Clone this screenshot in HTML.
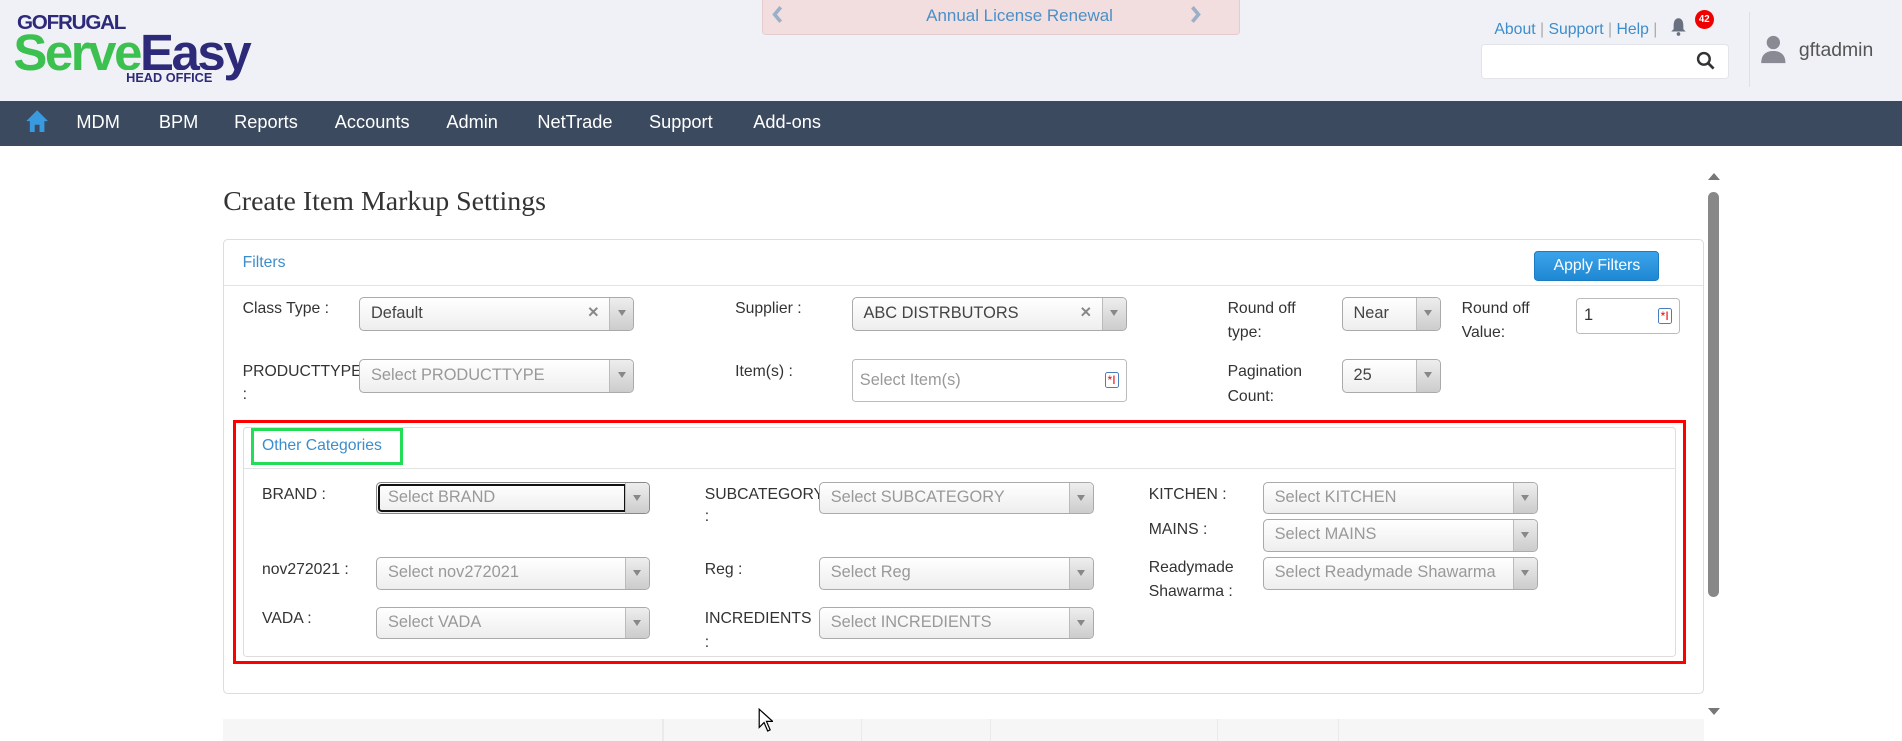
<!DOCTYPE html>
<html><head><meta charset="utf-8"><style>
html,body{margin:0;padding:0;background:#fff;overflow:hidden;width:1902px;height:741px}
#w{zoom:1.21301;position:relative;width:1568px;height:611px;font-family:"Liberation Sans",sans-serif;}
.a{position:absolute}
.hdr{left:0;top:0;width:1568px;height:83px;background:#f0f1f6}
.nav{left:0;top:83px;width:1568px;height:37px;background:#3b4a5f}
.nav span{position:absolute;top:9px;color:#fff;font-size:15px}
.lbl{position:absolute;font-size:13px;color:#333;line-height:20px}
.sel{position:absolute;height:26px;border:1px solid #aaa;border-radius:4px;background:linear-gradient(#fff,#eee);box-sizing:border-box;font-size:13.5px;color:#999;line-height:24px;padding-left:9px;overflow:hidden;white-space:nowrap}
.sel.v{color:#444}
.sel .ar{position:absolute;right:0;top:0;width:19px;height:100%;border-left:1px solid #bbb;background:linear-gradient(#eee,#ccc)}
.sel .ar:after{content:"";position:absolute;left:6px;top:10px;border:3.5px solid transparent;border-top:5px solid #888}
.sel .x{position:absolute;right:28px;top:0;color:#888;font-size:12px;font-weight:bold}
.inp{position:absolute;border:1px solid #bbb;border-radius:3px;background:#fff;box-sizing:border-box;font-size:13.5px;color:#999;padding-left:6px}
.ic{position:absolute;right:6px;width:11px;height:13px;border:1px solid #4a7cc0;border-radius:2px;color:#e00;font-size:10px;line-height:12px;text-align:left;padding-left:1px;box-sizing:border-box}
</style></head><body><div id="w">
<div class="a hdr"></div>
<div class="a" style="left:14px;top:9px;font-size:17px;font-weight:bold;color:#2e2a7a;letter-spacing:-1px">GOFRUGAL</div>
<div class="a" style="left:11px;top:20px;font-size:42px;font-weight:bold;letter-spacing:-2px;line-height:48px"><span style="color:#3cc04f">Serve</span><span style="color:#2e2a7a">Easy</span></div>
<div class="a" style="left:104px;top:58px;font-size:10.5px;font-weight:bold;color:#2e2a7a;background:#f0f1f6;padding-right:2px">HEAD OFFICE</div>
<div class="a" style="left:628px;top:-1px;width:394px;height:30px;background:#f2dede;border:1px solid #e5cccc;border-radius:0 0 3px 3px;box-sizing:border-box"></div>
<svg class="a" style="left:636px;top:5px" width="10" height="14" viewBox="0 0 10 14"><path d="M8 1L3 7l5 6" fill="none" stroke="#9bb0c8" stroke-width="3"/></svg>
<svg class="a" style="left:981px;top:5px" width="10" height="14" viewBox="0 0 10 14"><path d="M2 1l5 6-5 6" fill="none" stroke="#9bb0c8" stroke-width="3"/></svg>
<div class="a" style="left:628px;top:5px;width:425px;text-align:center;font-size:14px;color:#4a90c8">Annual License Renewal</div>
<div class="a" style="left:1232px;top:17px;font-size:13px;color:#3c8dcc;white-space:nowrap">About <span style="color:#aaa">|</span> Support <span style="color:#aaa">|</span> Help <span style="color:#aaa">|</span></div>
<svg class="a" style="left:1377px;top:14px" width="14" height="16" viewBox="0 0 14 16"><path d="M7 1C4 1 3 4 3 7v3L1 12h12l-2-2V7c0-3-1-6-4-6z" fill="#6a7080"/><circle cx="7" cy="14" r="1.5" fill="#6a7080"/></svg>
<div class="a" style="left:1397px;top:8px;width:16px;height:16px;border-radius:50%;background:#e00;color:#fff;font-size:8px;font-weight:bold;text-align:center;line-height:16px">42</div>
<div class="a" style="left:1221px;top:36px;width:204px;height:29px;background:#fff;border:1px solid #e2e4ea;border-radius:3px;box-sizing:border-box"></div>
<svg class="a" style="left:1398px;top:42px" width="16" height="16" viewBox="0 0 16 16"><circle cx="6.5" cy="6.5" r="4.8" fill="none" stroke="#333" stroke-width="2"/><path d="M10 10l4.5 4.5" stroke="#333" stroke-width="2.2"/></svg>
<div class="a" style="left:1442px;top:10px;width:1px;height:62px;background:#dde"></div>
<svg class="a" style="left:1451px;top:28px" width="22" height="26" viewBox="0 0 22 26"><circle cx="11" cy="7" r="5.5" fill="#8a8a94"/><path d="M1 24c0-7 4-10 10-10s10 3 10 10z" fill="#8a8a94"/></svg>
<div class="a" style="left:1483px;top:32px;font-size:16px;color:#555">gftadmin</div>
<div class="a nav">
<svg style="position:absolute;left:21px;top:7px" width="20" height="19" viewBox="0 0 20 19"><path d="M10 1L1 10h3v9h4v-6h4v6h4v-9h3z" fill="#3a9ae0"/></svg>
<span style="left:63px">MDM</span><span style="left:131px">BPM</span><span style="left:193px">Reports</span><span style="left:276px">Accounts</span><span style="left:368px">Admin</span><span style="left:443px">NetTrade</span><span style="left:535px">Support</span><span style="left:621px">Add-ons</span></div>
<div class="a" style="left:184px;top:153px;font-family:'Liberation Serif',serif;font-size:23px;color:#333">Create Item Markup Settings</div>
<div class="a" style="left:184px;top:197px;width:1221px;height:375px;border:1px solid #ddd;border-radius:4px;box-sizing:border-box"></div>
<div class="a" style="left:185px;top:235px;width:1219px;height:1px;background:#e3e3e3"></div>
<div class="a" style="left:200px;top:209px;font-size:13px;color:#3c8dcc">Filters</div>
<div class="a" style="left:1265px;top:207px;width:103px;height:25px;background:linear-gradient(#3aa3ea,#1f88d2);border:1px solid #1a7cc4;border-radius:3px;box-sizing:border-box;color:#fff;font-size:13px;text-align:center;line-height:23px">Apply Filters</div>

<div class="lbl" style="left:200px;top:245px">Class Type :</div>
<div class="sel v" style="left:296px;top:245px;width:227px;height:28px;line-height:26px">Default<span class="x">✕</span><span class="ar"></span></div>
<div class="lbl" style="left:606px;top:245px">Supplier :</div>
<div class="sel v" style="left:702px;top:245px;width:227px;height:28px;line-height:26px">ABC DISTRBUTORS<span class="x">✕</span><span class="ar"></span></div>
<div class="lbl" style="left:1012px;top:245px">Round off<br>type:</div>
<div class="sel v" style="left:1106px;top:245px;width:82px;height:28px;line-height:26px">Near<span class="ar"></span></div>
<div class="lbl" style="left:1205px;top:245px">Round off<br>Value:</div>
<div class="inp" style="left:1299px;top:246px;width:86px;height:29px;line-height:27px;color:#333">1<span class="ic" style="top:7px">*I</span></div>

<div class="lbl" style="left:200px;top:297px;width:96px;overflow:hidden;white-space:nowrap">PRODUCTTYPE</div>
<div class="lbl" style="left:200px;top:316px">:</div>
<div class="sel" style="left:296px;top:296px;width:227px;height:28px;line-height:26px">Select PRODUCTTYPE<span class="ar"></span></div>
<div class="lbl" style="left:606px;top:297px">Item(s) :</div>
<div class="inp" style="left:702px;top:296px;width:227px;height:35px;line-height:33px">Select Item(s)<span class="ic" style="top:10px">*I</span></div>
<div class="lbl" style="left:1012px;top:297px">Pagination<br>Count:</div>
<div class="sel v" style="left:1106px;top:296px;width:82px;height:28px;line-height:26px">25<span class="ar"></span></div>

<div class="a" style="left:200px;top:352px;width:1182px;height:190px;border:1px solid #ddd;border-radius:3px;box-sizing:border-box"></div>
<div class="a" style="left:201px;top:386px;width:1180px;height:1px;background:#e3e3e3"></div>
<div class="a" style="left:192px;top:346px;width:1198px;height:201px;border:3px solid #f00;box-sizing:border-box"></div>
<div class="a" style="left:207px;top:353px;width:125px;height:30px;border:3px solid #22dd55;box-sizing:border-box"></div>
<div class="a" style="left:216px;top:360px;font-size:13px;color:#3c8dcc">Other Categories</div>

<div class="lbl" style="left:216px;top:398px">BRAND :</div>
<div class="sel" style="left:310px;top:397px;width:226px;height:27px;border-color:#888"><span style="position:absolute;left:1px;top:1px;right:19px;bottom:1px;border:2px solid #111;border-radius:3px 0 0 3px"></span>Select BRAND<span class="ar"></span></div>
<div class="lbl" style="left:581px;top:398px;width:94px;overflow:hidden;white-space:nowrap">SUBCATEGORY</div>
<div class="lbl" style="left:581px;top:416px">:</div>
<div class="sel" style="left:675px;top:397px;width:227px;height:27px">Select SUBCATEGORY<span class="ar"></span></div>
<div class="lbl" style="left:947px;top:398px">KITCHEN :</div>
<div class="sel" style="left:1041px;top:397px;width:227px;height:27px">Select KITCHEN<span class="ar"></span></div>
<div class="lbl" style="left:947px;top:427px">MAINS :</div>
<div class="sel" style="left:1041px;top:428px;width:227px;height:27px">Select MAINS<span class="ar"></span></div>

<div class="lbl" style="left:216px;top:460px">nov272021 :</div>
<div class="sel" style="left:310px;top:459px;width:226px;height:27px">Select nov272021<span class="ar"></span></div>
<div class="lbl" style="left:581px;top:460px">Reg :</div>
<div class="sel" style="left:675px;top:459px;width:227px;height:27px">Select Reg<span class="ar"></span></div>
<div class="lbl" style="left:947px;top:458px">Readymade<br>Shawarma :</div>
<div class="sel" style="left:1041px;top:459px;width:227px;height:27px">Select Readymade Shawarma<span class="ar"></span></div>

<div class="lbl" style="left:216px;top:500px">VADA :</div>
<div class="sel" style="left:310px;top:500px;width:226px;height:27px">Select VADA<span class="ar"></span></div>
<div class="lbl" style="left:581px;top:500px">INCREDIENTS</div>
<div class="lbl" style="left:581px;top:520px">:</div>
<div class="sel" style="left:675px;top:500px;width:227px;height:27px">Select INCREDIENTS<span class="ar"></span></div>

<div class="a" style="left:184px;top:593px;width:1221px;height:18px;background:#f6f6f6"></div>
<div class="a" style="left:546px;top:593px;width:1px;height:18px;background:#eaeaea"></div>
<div class="a" style="left:710px;top:593px;width:1px;height:18px;background:#eaeaea"></div>
<div class="a" style="left:816px;top:593px;width:1px;height:18px;background:#eaeaea"></div>
<div class="a" style="left:1003px;top:593px;width:1px;height:18px;background:#eaeaea"></div>
<div class="a" style="left:1103px;top:593px;width:1px;height:18px;background:#eaeaea"></div>

<div class="a" style="left:1408px;top:143px;border:5px solid transparent;border-bottom:6px solid #777;border-top:0"></div>
<div class="a" style="left:1408px;top:158px;width:9px;height:334px;background:#888;border-radius:5px"></div>
<div class="a" style="left:1408px;top:584px;border:5px solid transparent;border-top:6px solid #777;border-bottom:0"></div>
<svg class="a" style="left:625px;top:584px" width="12" height="20" viewBox="0 0 12 20"><path d="M1 1v15l4-4 3 7 2-1-3-7h5z" fill="#fff" stroke="#000" stroke-width="1"/></svg>
</div></body></html>
